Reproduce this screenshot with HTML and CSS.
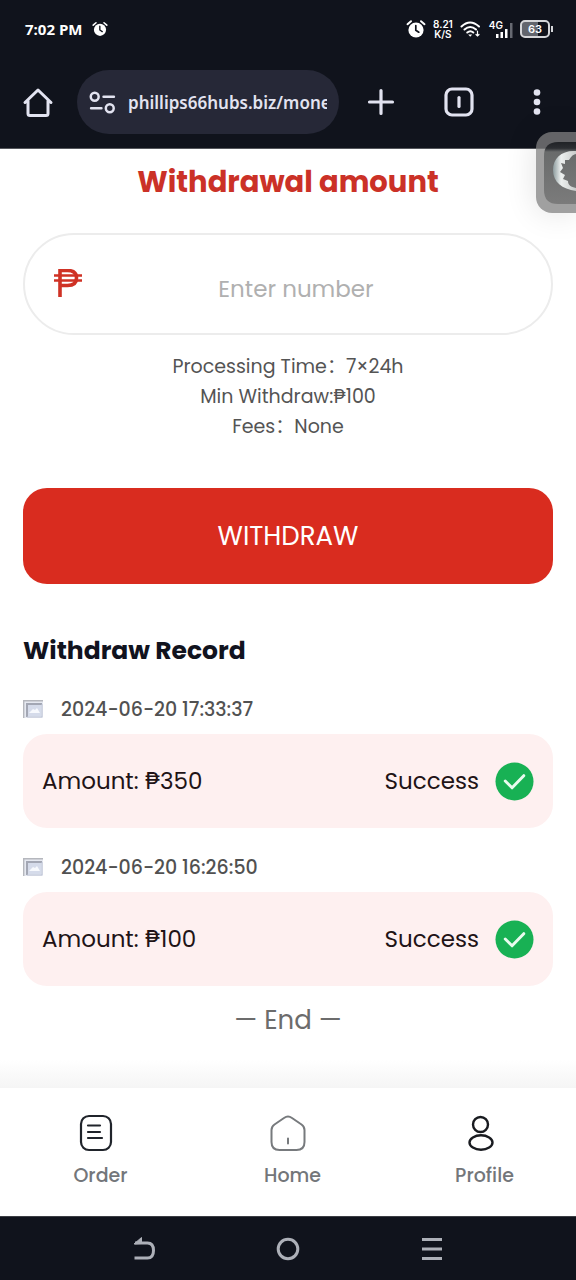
FILE: index.html
```html
<!DOCTYPE html>
<html lang="en">
<head>
<meta charset="utf-8">
<meta name="viewport" content="width=device-width, initial-scale=1">
<title>Withdraw</title>
<link rel="stylesheet" href="styles.css">
</head>
<body>
<svg class="defs" aria-hidden="true">
  <symbol id="alarm" viewBox="0 0 20 20">
    <circle cx="10" cy="11" r="7.6" fill="currentColor"/>
    <path d="M1.5 5.2 5 2.2M18.5 5.2 15 2.2" stroke="currentColor" stroke-width="2" stroke-linecap="round"/>
    <path d="M9.8 6.6v4.6l3 2" fill="none" stroke="#10131c" stroke-width="1.7" stroke-linecap="round"/>
  </symbol>
  <symbol id="broken" viewBox="0 0 20 20">
    <path d="M0 1h20v18H0z" fill="#e6e9f1"/>
    <path d="M.7 19V1.700H20" fill="none" stroke="#b5b7bd" stroke-width="1.400"/>
    <path d="M4 18V5h15" fill="none" stroke="#a3a7b4" stroke-width="2"/>
    <path d="M5 6h13v11H5z" fill="#d5dbea"/>
    <path d="m6 14 4-4 2 1 2-2 3 5z" fill="#f7f9fd"/>
    <path d="M4 18h15V5" fill="none" stroke="#bbc2d4"/>
  </symbol>
  <symbol id="done" viewBox="0 0 40 40">
    <circle cx="20" cy="20" r="19.5" fill="#18b154"/>
    <path d="m10.500 19.500 7 7L29.500 14" fill="none" stroke="#e9fbef" stroke-width="3" stroke-linecap="round" stroke-linejoin="round"/>
  </symbol>
</svg>
<div class="screen">
  <header class="chrome">
    <div class="status">
      <span class="clock">7:02 PM</span>
      <svg class="alarm-small"><use href="#alarm"/></svg>
      <div class="indicators">
        <svg class="alarm-large"><use href="#alarm"/></svg>
        <span class="speed"><span>8.21</span><span>K/S</span></span>
        <svg class="wifi" viewBox="0 0 22 18" fill="none" stroke="currentColor" stroke-width="2" stroke-linecap="round">
          <path d="M1.500 6.500Q10 -1.500 19 6.500M4.500 9.500Q10.200 4.500 16 9.500M7.300 12.500q3-2.500 6 0"/>
          <path d="m10.200 16.800-2-2.300h4z" fill="currentColor" stroke="none"/>
          <path d="M17.500 11v5m-1.500-1.500 1.500 1.500 1.500-1.500" stroke-width="1.200"/>
        </svg>
        <span class="cell">
          <span class="cell-type">4G</span>
          <svg class="bars" viewBox="0 0 18 16"><path d="M1 12h2.500v4H1zM5.500 10H8v6H5.500zM10 7h2.500v9H10z" fill="#fff"/><path d="M15 1h2.500v15H15z" fill="#666971"/></svg>
        </span>
        <span class="battery">63</span>
      </div>
    </div>
    <div class="toolbar">
      <button class="tool" aria-label="Browser home"><svg viewBox="0 0 32 32" fill="none" stroke="currentColor" stroke-width="3" stroke-linejoin="round" stroke-linecap="round"><path d="M6 14.500V27.500Q6 29.500 8 29.500H24Q26 29.500 26 27.500V14.500M3 16.500 16 4 29 16.500"/></svg></button>
      <div class="address">
        <svg class="site-icon" viewBox="0 0 26 22" fill="none" stroke="currentColor" stroke-width="2.400" stroke-linecap="round"><circle cx="5.500" cy="5.500" r="3.800"/><path d="M14 5.500h10M2 16.500h10"/><circle cx="20" cy="16.500" r="3.800"/></svg>
        <input class="url" type="text" value="phillips66hubs.biz/money" aria-label="Address">
      </div>
      <div class="tools">
        <button class="tool" aria-label="New tab"><svg viewBox="0 0 32 32" fill="none" stroke="currentColor" stroke-width="3.200" stroke-linecap="round"><path d="M16 4.500v23M4.500 16h23"/></svg></button>
        <button class="tool" aria-label="Tabs"><svg viewBox="0 0 32 32" fill="none" stroke="currentColor" stroke-width="3.200" stroke-linecap="round"><rect x="3" y="3" width="26" height="26" rx="6"/><path d="M16 11.500v9"/></svg></button>
        <button class="tool" aria-label="Menu"><svg viewBox="0 0 32 32" fill="currentColor"><circle cx="16" cy="6.500" r="3.300"/><circle cx="16" cy="16" r="3.300"/><circle cx="16" cy="25.500" r="3.300"/></svg></button>
      </div>
    </div>
  </header>

  <main class="page">
    <label class="title" for="amount">Withdrawal amount</label>
    <div class="amount-box">
      <svg class="currency" viewBox="0 0 28 30" fill="none" stroke="#cf3225" role="img" aria-label="Philippine peso"><path d="M6 28V1.500H13.500Q22.500 1.500 22.500 9T13.500 16.500H6" stroke-width="3.600"/><path d="M0 6.500H28M0 11.500H28" stroke-width="2.400"/></svg>
      <input class="amount" id="amount" type="text" inputmode="decimal" placeholder="Enter number">
    </div>
    <div class="info">
      <p>Processing Time：7×24h</p>
      <p>Min Withdraw:₱100</p>
      <p>Fees：None</p>
    </div>
    <button class="withdraw">WITHDRAW</button>

    <h2 class="heading">Withdraw Record</h2>
    <section class="record">
      <div class="date"><svg><use href="#broken"/></svg><time>2024-06-20 17:33:37</time></div>
      <div class="card"><span>Amount: ₱350</span><span class="state">Success<svg><use href="#done"/></svg></span></div>
    </section>
    <section class="record">
      <div class="date"><svg><use href="#broken"/></svg><time>2024-06-20 16:26:50</time></div>
      <div class="card"><span>Amount: ₱100</span><span class="state">Success<svg><use href="#done"/></svg></span></div>
    </section>
    <p class="end">— End —</p>
  </main>

  <nav class="tabs">
    <a class="tab" href="#order"><svg viewBox="0 0 40 40" fill="none" stroke="#20242b" stroke-width="2.200" stroke-linecap="round"><rect x="5" y="3" width="30" height="34" rx="8"/><path d="M12 12.500h12M12 19h12M12 25h14"/></svg><span>Order</span></a>
    <a class="tab" href="#home"><svg viewBox="0 0 40 40" fill="none" stroke="#777a7d" stroke-width="2" stroke-linejoin="round" stroke-linecap="round"><path d="M3.500 17Q3.500 13.500 6.500 11.500L16 5Q20 2.200 24 5L33.500 11.500Q36.500 13.500 36.500 17V29Q36.500 37 28.500 37H11.500Q3.500 37 3.500 29ZM20 25.500v5"/></svg><span>Home</span></a>
    <a class="tab" href="#profile"><svg viewBox="0 0 40 40" fill="none" stroke="#191b20" stroke-width="2.400"><circle cx="20.500" cy="11.500" r="7.500"/><ellipse cx="21" cy="29.500" rx="11.500" ry="7.200"/></svg><span>Profile</span></a>
  </nav>

  <div class="system">
    <button aria-label="Back"><svg viewBox="0 0 28 28" fill="none" stroke="currentColor" stroke-width="3"><path d="M5 8H17.500Q23.500 8 23.500 15.500T17.500 23H4.500"/><path d="M4 9 11.500 2.500V8.500z" fill="currentColor" stroke="currentColor" stroke-width="1"/></svg></button>
    <button aria-label="Home"><svg viewBox="0 0 28 28" fill="none" stroke="currentColor" stroke-width="3"><circle cx="14" cy="14" r="9.800"/></svg></button>
    <button aria-label="Recent apps"><svg viewBox="0 0 28 28" fill="none" stroke="currentColor" stroke-width="3"><path d="M4 4.500h20M4 14h20M4 23.500h20"/></svg></button>
  </div>

  <div class="floater">
    <svg viewBox="0 0 32 62" aria-hidden="true">
      <defs><linearGradient id="tile" x1="0" y1="0" x2="0" y2="1"><stop offset="0" stop-color="#202226"/><stop offset=".1" stop-color="#2c2e32"/><stop offset=".16" stop-color="#696b6b"/><stop offset="1" stop-color="#7b7b7b"/></linearGradient><linearGradient id="moon"><stop offset="0" stop-color="#8d9c9e"/><stop offset=".35" stop-color="#edf0ef"/><stop offset="1" stop-color="#c9cbca"/></linearGradient></defs>
      <path d="M32 0H14Q0 0 0 14V48Q0 62 14 62H32z" fill="url(#tile)"/>
      <path d="M32 9C18 8 9 16 9 28S18 47 32 49V46C27 45 24 43 24 39L19 37 21 33 16 30 19 26 17 21 21 22 21 18 25 18C27 14 30 12 32 12z" fill="url(#moon)"/>
    </svg>
  </div>
</div>
</body>
</html>
```
FILE: styles.css
```css
* { box-sizing: border-box; }
body { margin: 0; background: #fff; font-family: Poppins, Inter, "Noto Sans CJK SC", sans-serif; }
button { padding: 0; border: 0; background: none; color: inherit; font: inherit; }
input { min-width: 0; border: 0; outline: 0; background: none; font: inherit; }
p, h2 { margin: 0; }
svg { display: block; flex: none; }
.defs { position: absolute; width: 0; height: 0; }
.screen { position: relative; display: flex; flex-direction: column; min-height: 100vh; overflow: hidden; }

.chrome { padding-bottom: 14px; border-bottom: 1px solid #55575c; background: #10131c; color: #fff; }
.status { display: flex; align-items: center; height: 58px; padding: 0 26px 0 25px; }
.clock { font: 700 15px "Open Sans", sans-serif; }
.alarm-small { width: 16px; height: 16px; margin-left: 10px; }
.indicators { display: flex; align-items: center; gap: 7px; margin-left: auto; }
.alarm-large { width: 20px; height: 20px; }
.speed { display: flex; flex-direction: column; align-items: center; font: 600 10px/10px Inter, sans-serif; }
.wifi { width: 22px; height: 18px; }
.cell { display: flex; }
.cell-type { margin-right: -8px; font: 600 10px/10px Inter, sans-serif; }
.bars { width: 18px; height: 16px; margin-top: 2px; }
.battery { position: relative; width: 30px; border: 2px solid #d5d6d9; border-radius: 5px; background: linear-gradient(90deg, #62656d 63%, transparent 63%); font: 600 11px/14px Inter, sans-serif; text-align: center; }
.battery::after { content: ""; position: absolute; right: -5px; top: 4px; width: 2px; height: 6px; background: #d5d6d9; }
.toolbar { display: flex; align-items: center; gap: 23px; padding: 12px 23px 0 22px; color: #e2e3f0; }
.tools { display: flex; gap: 46px; margin-left: 3px; }
.tool { flex: none; width: 32px; height: 32px; }
.tool svg { width: 32px; height: 32px; }
.address { display: flex; flex: 1; align-items: center; gap: 12px; min-width: 0; height: 64px; padding: 0 12px; border-radius: 32px; background: #262837; }
.site-icon { width: 27px; height: 23px; }
.url { flex: 1; width: 0; padding: 2px 0 0; color: inherit; font: 600 17px/24px "Noto Sans", sans-serif; }

.page { flex: 1; padding: 13px 23px 0; background: linear-gradient(to top, #f5f5f5, #fff 28px); }
.title { display: block; color: #cb3127; font-size: 29px; font-weight: 700; line-height: 40px; text-align: center; }
.amount-box { display: flex; align-items: center; height: 102px; margin-top: 31px; padding: 0 29px; border: 2px solid #ececec; border-radius: 51px; background: #fff; }
.currency { width: 28px; height: 30px; }
.amount { flex: 1; padding: 10px 12px 0 0; color: #333; font-size: 23px; text-align: center; }
.amount::placeholder { color: #b0b0b0; opacity: 1; }
.info { margin-top: 17px; color: #545454; font-size: 19px; line-height: 30px; text-align: center; }
.withdraw { display: block; width: 100%; height: 96px; margin-top: 46px; border-radius: 24px; background: #d92c1f; color: #fff; font-size: 26px; }
.heading { margin-top: 48px; color: #11131e; font-size: 25px; font-weight: 700; line-height: 38px; }
.record { padding-top: 24px; }
.date { display: flex; align-items: center; gap: 18px; height: 30px; color: #515151; font-size: 19px; font-weight: 500; }
.date svg { width: 20px; height: 20px; }
.card { display: flex; align-items: center; justify-content: space-between; height: 94px; margin-top: 10px; padding: 0 19px; border-radius: 24px; background: #fef0f0; color: #211316; font-size: 23px; }
.state { display: flex; align-items: center; gap: 16px; }
.state svg { width: 39px; height: 39px; }
.end { padding: 15px 0 40px; color: #6c6c6c; font-size: 26px; line-height: 38px; text-align: center; }

.tabs { display: grid; grid-template-columns: repeat(3, 1fr); height: 128px; padding-top: 25px; background: #fff; }
.tab { display: flex; flex-direction: column; align-items: center; gap: 9px; color: #73767a; font-size: 19px; font-weight: 500; line-height: 28px; text-decoration: none; }
.tab svg { width: 40px; height: 40px; }
.tab span { padding-left: 9px; }
.system { display: flex; align-items: center; justify-content: center; gap: 116px; height: 64px; border-top: 1px solid #3c3e44; background: #10131c; color: #adb0b8; }
.system svg { width: 28px; height: 28px; }
.floater { position: absolute; top: 132px; right: 0; width: 40px; height: 81px; padding: 10px 0 9px 8px; border-radius: 16px 0 0 16px; background: rgba(128, 128, 128, .75); box-shadow: 0 0 32px rgba(0, 0, 0, .12); }
.floater svg { width: 32px; height: 62px; }
```
